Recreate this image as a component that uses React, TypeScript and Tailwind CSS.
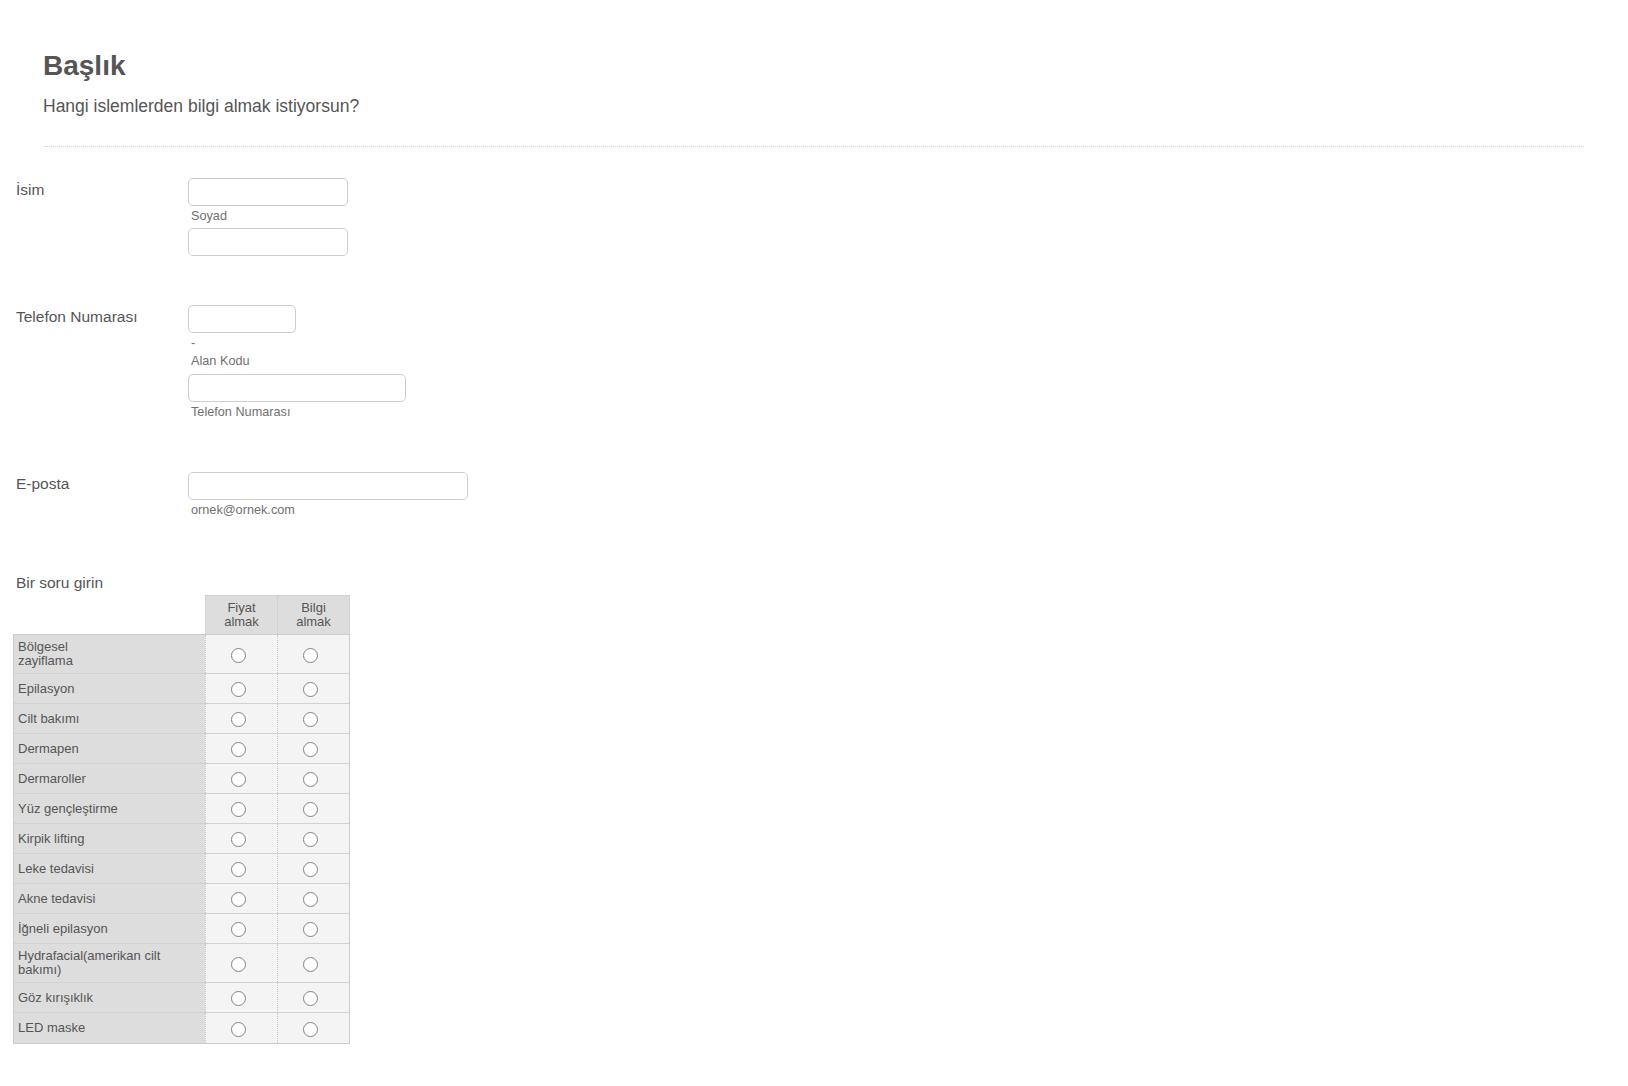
import React from "react";

const services: string[][] = [
  ["Bölgesel", "zayiflama"],
  ["Epilasyon"],
  ["Cilt bakımı"],
  ["Dermapen"],
  ["Dermaroller"],
  ["Yüz gençleştirme"],
  ["Kirpik lifting"],
  ["Leke tedavisi"],
  ["Akne tedavisi"],
  ["İğneli epilasyon"],
  ["Hydrafacial(amerikan cilt", "bakımı)"],
  ["Göz kırışıklık"],
  ["LED maske"],
];

function TextInput({ width }: { width: string }) {
  return (
    <input
      type="text"
      className={`${width} block h-[28px] rounded-[5px] border border-[#cdcdcd] bg-white px-2 text-[14px] outline-none`}
    />
  );
}

function SubLabel({ children, className = "" }: { children: React.ReactNode; className?: string }) {
  return <div className={`pl-[3px] text-[12.7px] leading-[15px] text-[#707070] ${className}`}>{children}</div>;
}

function Radio() {
  return <span className="inline-block h-[15px] w-[15px] rounded-full border border-[#828282] bg-white" />;
}

export default function App() {
  return (
    <div className="min-h-screen bg-white font-['Liberation_Sans',Arial,sans-serif] text-[#555]">
      <div className="px-[43px] pt-[50px]">
        <h1 className="text-[28px] font-bold leading-[32px]">Başlık</h1>
        <p className="mt-[14px] text-[17.5px] leading-[20px]">Hangi islemlerden bilgi almak istiyorsun?</p>
      </div>
      <div className="mx-[44px] mt-[30px] border-t border-dotted border-[#d6d6d6]" />

      <div className="pl-[16px]">
        {/* name */}
        <div className="mt-[31px] flex items-start">
          <div className="w-[172px] pt-[3px] text-[15.5px] leading-[18px]">İsim</div>
          <div>
            <TextInput width="w-[160px]" />
            <SubLabel className="mt-[3px]">Soyad</SubLabel>
            <div className="mt-[4px]">
              <TextInput width="w-[160px]" />
            </div>
          </div>
        </div>

        {/* phone */}
        <div className="mt-[49px] flex items-start">
          <div className="w-[172px] pt-[3px] text-[15.5px] leading-[18px]">Telefon Numarası</div>
          <div>
            <TextInput width="w-[108px]" />
            <SubLabel className="mt-[3px] text-[#555]">-</SubLabel>
            <SubLabel className="mt-[3px]">Alan Kodu</SubLabel>
            <div className="mt-[5px]">
              <TextInput width="w-[218px]" />
            </div>
            <SubLabel className="mt-[3px]">Telefon Numarası</SubLabel>
          </div>
        </div>

        {/* email */}
        <div className="mt-[52px] flex items-start">
          <div className="w-[172px] pt-[3px] text-[15.5px] leading-[18px]">E-posta</div>
          <div>
            <TextInput width="w-[280px]" />
            <SubLabel className="mt-[3px]">ornek@ornek.com</SubLabel>
          </div>
        </div>

        {/* matrix */}
        <div className="mt-[56px] text-[15.5px] leading-[18px]">Bir soru girin</div>
        <div className="ml-[-3px] mt-[3px] w-[337px] text-[13px] leading-[14px] text-[#555]">
          <div className="flex h-[39px]">
            <div className="w-[192px]" />
            <div className="flex w-[73px] items-center justify-center border-x border-t border-dotted border-[#c8c8c8] bg-[#dddddd] text-center">
              Fiyat
              <br />
              almak
            </div>
            <div className="flex w-[72px] items-center justify-center border-r border-t border-dotted border-[#c8c8c8] bg-[#dddddd] text-center">
              Bilgi
              <br />
              almak
            </div>
          </div>
          <div className="border border-[#cccccc]">
            {services.map((lines, i) => (
              <div
                key={i}
                className={`flex ${lines.length > 1 ? "h-[39px]" : "h-[30px]"} ${
                  i < services.length - 1 ? "border-b border-[#d2d2d2]" : ""
                }`}
              >
                <div className="flex w-[191px] items-center bg-[#dddddd] pl-[4px]">
                  <span>
                    {lines.map((l, j) => (
                      <React.Fragment key={j}>
                        {j > 0 && <br />}
                        {l}
                      </React.Fragment>
                    ))}
                  </span>
                </div>
                <div className="flex w-[72px] items-center justify-center border-l border-dotted border-[#c8c8c8] bg-[#f4f4f4] pr-[6px] pt-[2px]">
                  <Radio />
                </div>
                <div className="flex w-[72px] items-center justify-center border-l border-dotted border-[#c8c8c8] bg-[#f4f4f4] pr-[6px] pt-[2px]">
                  <Radio />
                </div>
              </div>
            ))}
          </div>
        </div>
      </div>
    </div>
  );
}
